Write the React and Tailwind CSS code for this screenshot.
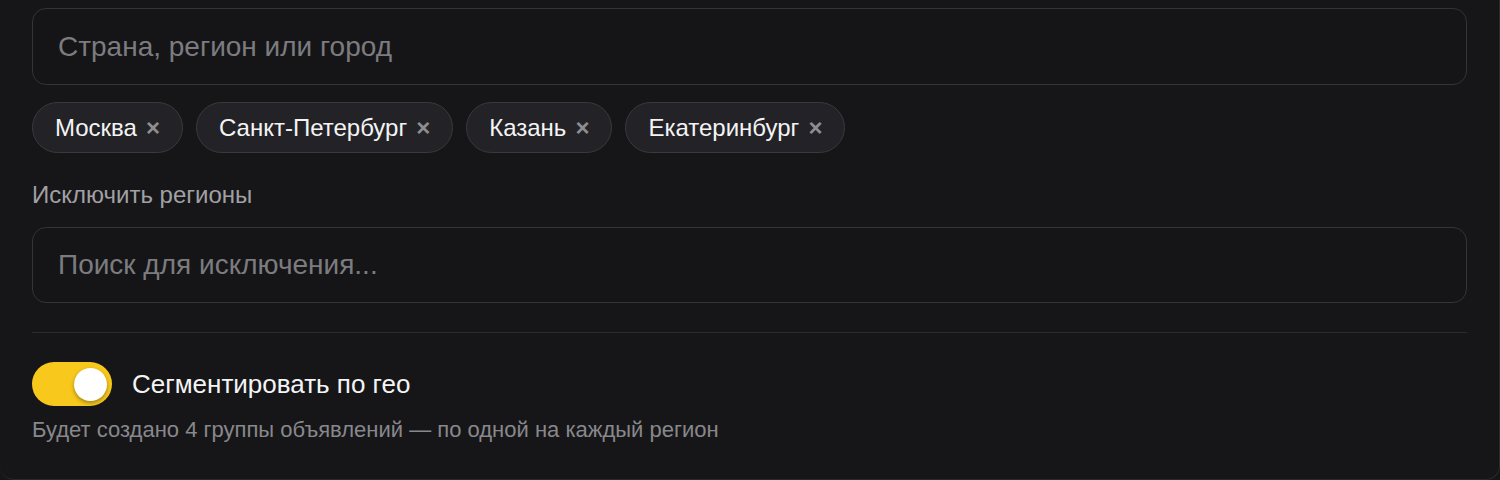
import { useState } from 'react';

// Geo targeting block: region search, selected chips, exclusions and
// the "segment by geo" switch.
const REGIONS = ['Москва', 'Санкт-Петербург', 'Казань', 'Екатеринбург'];

export default function App() {
  const [regions, setRegions] = useState(REGIONS);
  const [segment, setSegment] = useState(true);

  return (
    <div className="min-h-screen bg-[#161618] font-['Liberation_Sans',Arial,sans-serif]">
      <div className="h-[480px] rounded-br-[14px] rounded-bl-[14px] border-b border-r border-[#2a2a2e] bg-[#161618] px-8 pt-2">
        {/* Region search */}
        <input
          type="text"
          placeholder="Страна, регион или город"
          className="block h-[77px] w-full rounded-[14px] border border-[#343438] bg-[#151517] px-[25px] text-[28px] text-white placeholder-[#7c7c80] outline-none"
        />

        {/* Selected regions */}
        <div className="mt-[17px] flex flex-wrap gap-[13px]">
          {regions.map((r) => (
            <span
              key={r}
              className="flex h-[51px] items-center gap-[9px] rounded-full border border-[#3a3a3e] bg-[#232327] pl-[22px] pr-[22px] text-[24px] text-[#f4f4f5]"
            >
              {r}
              <button
                onClick={() => setRegions(regions.filter((x) => x !== r))}
                className="text-[24px] font-bold leading-none text-[#8e8e92]"
              >
                ×
              </button>
            </span>
          ))}
        </div>

        {/* Exclusions */}
        <p className="mt-[28px] text-[24px] leading-[28px] text-[#a1a1a5]">Исключить регионы</p>
        <input
          type="text"
          placeholder="Поиск для исключения..."
          className="mt-[18px] block h-[76px] w-full rounded-[14px] border border-[#343438] bg-[#151517] px-[25px] text-[28px] text-white placeholder-[#7c7c80] outline-none"
        />

        <div className="mt-[29px] border-t border-[#2c2c30]" />

        {/* Segment switch */}
        <div className="mt-[29px] flex items-center gap-[20px]">
          <button
            onClick={() => setSegment(!segment)}
            className={
              segment
                ? 'flex h-[44px] w-[80px] items-center justify-end rounded-full bg-[#f8c91c] px-[5px]'
                : 'flex h-[44px] w-[80px] items-center justify-start rounded-full bg-[#3a3a3e] px-[5px]'
            }
          >
            <span className="h-[33px] w-[33px] rounded-full bg-white shadow-[0_2px_4px_rgba(0,0,0,0.35)]" />
          </button>
          <span className="text-[26px] text-[#f4f4f5]">Сегментировать по гео</span>
        </div>
        <p className="mt-[10px] text-[22px] leading-[28px] text-[#88888c]">
          Будет создано {regions.length} группы объявлений — по одной на каждый регион
        </p>
      </div>
    </div>
  );
}
